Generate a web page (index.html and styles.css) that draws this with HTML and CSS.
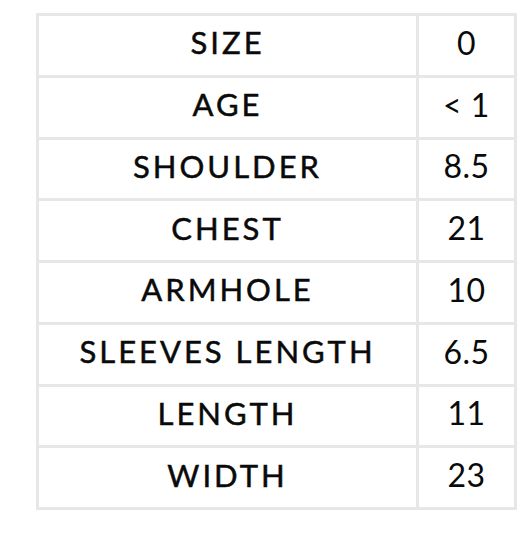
FILE: index.html
```html
<!DOCTYPE html>
<html>
<head>
<meta charset="utf-8">
<link rel="stylesheet" href="styles.css">
</head>
<body>
<div class="size-chart">
  <div class="label">SIZE</div><div class="value">0</div>
  <div class="label">AGE</div><div class="value">&lt; 1</div>
  <div class="label">SHOULDER</div><div class="value">8.5</div>
  <div class="label">CHEST</div><div class="value">21</div>
  <div class="label">ARMHOLE</div><div class="value">10</div>
  <div class="label">SLEEVES LENGTH</div><div class="value">6.5</div>
  <div class="label">LENGTH</div><div class="value">11</div>
  <div class="label">WIDTH</div><div class="value">23</div>
</div>
</body>
</html>
```
FILE: styles.css
```css
html, body {
  margin: 0;
  padding: 0;
  background: #ffffff;
}
body {
  padding: 13px 0 0 36px;
  font-family: Lato, "Open Sans", sans-serif;
  color: #0a0a0a;
}
.size-chart {
  display: grid;
  grid-template-columns: 377px 95px;
  grid-template-rows: repeat(8, 1fr);
  gap: 3px;
  padding: 3px;
  width: 481px;
  height: 497px;
  box-sizing: border-box;
  background: #e7e7e8;
}
.label, .value {
  background: #ffffff;
  display: flex;
  align-items: center;
  justify-content: center;
  font-size: 31px;
  padding-bottom: 6px;
}
.label {
  font-weight: 400;
  letter-spacing: 3px;
  -webkit-text-stroke: 0.5px #0a0a0a;
}
.value {
  font-weight: 400;
  font-size: 32px;
  letter-spacing: 0.5px;
}
```
